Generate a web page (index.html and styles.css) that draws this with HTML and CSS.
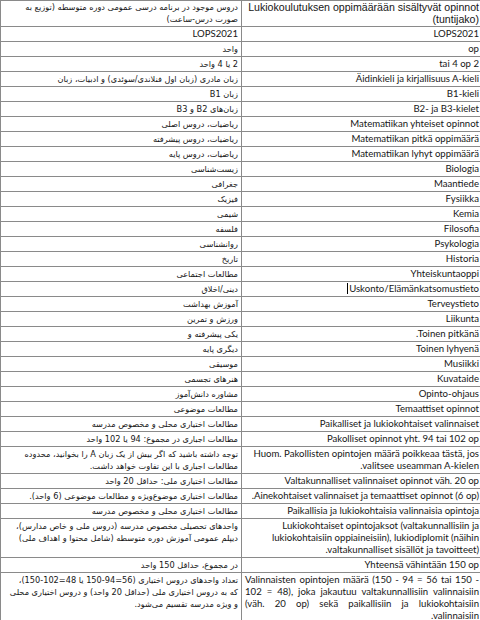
FILE: index.html
```html
<!DOCTYPE html>
<html lang="fi">
<head>
<meta charset="utf-8">
<title>Tuntijako</title>
<link rel="stylesheet" href="styles.css">
</head>
<body>
<table class="grid">
<colgroup><col class="c-fa"><col class="c-fi"></colgroup>
<tr class="head">
<td class="fa" lang="fa">دروس موجود در برنامه درسی عمومی دوره متوسطه (توزیع به<br>صورت درس-ساعت)</td>
<td class="fi hd">Lukiokoulutuksen oppimäärään sisältyvät opinnot<br>(tuntijako)</td>
</tr>
<tr><td class="fa lat">LOPS2021</td><td class="fi">LOPS2021</td></tr>
<tr><td class="fa" lang="fa">واحد</td><td class="fi">op</td></tr>
<tr><td class="fa" lang="fa">2 یا 4 واحد</td><td class="fi">tai 4 op 2</td></tr>
<tr><td class="fa" lang="fa">زبان مادری (زبان اول فنلاندی/سوئدی) و ادبیات، زبان</td><td class="fi">Äidinkieli ja kirjallisuus A-kieli</td></tr>
<tr><td class="fa" lang="fa">زبان B1</td><td class="fi">B1-kieli</td></tr>
<tr><td class="fa" lang="fa">زبان‌های B2 و B3</td><td class="fi">B2- ja B3-kielet</td></tr>
<tr><td class="fa" lang="fa">ریاضیات، دروس اصلی</td><td class="fi">Matematiikan yhteiset opinnot</td></tr>
<tr><td class="fa" lang="fa">ریاضیات، دروس پیشرفته</td><td class="fi">Matematiikan pitkä oppimäärä</td></tr>
<tr><td class="fa" lang="fa">ریاضیات، دروس پایه</td><td class="fi">Matematiikan lyhyt oppimäärä</td></tr>
<tr><td class="fa" lang="fa">زیست‌شناسی</td><td class="fi">Biologia</td></tr>
<tr><td class="fa" lang="fa">جغرافی</td><td class="fi">Maantiede</td></tr>
<tr><td class="fa" lang="fa">فیزیک</td><td class="fi">Fysiikka</td></tr>
<tr><td class="fa" lang="fa">شیمی</td><td class="fi">Kemia</td></tr>
<tr><td class="fa" lang="fa">فلسفه</td><td class="fi">Filosofia</td></tr>
<tr><td class="fa" lang="fa">روانشناسی</td><td class="fi">Psykologia</td></tr>
<tr><td class="fa" lang="fa">تاریخ</td><td class="fi">Historia</td></tr>
<tr><td class="fa" lang="fa">مطالعات اجتماعی</td><td class="fi">Yhteiskuntaoppi</td></tr>
<tr><td class="fa" lang="fa">دینی/اخلاق</td><td class="fi"><span class="caret"></span>Uskonto/Elämänkatsomustieto</td></tr>
<tr><td class="fa" lang="fa">آموزش بهداشت</td><td class="fi">Terveystieto</td></tr>
<tr><td class="fa" lang="fa">ورزش و تمرین</td><td class="fi">Liikunta</td></tr>
<tr><td class="fa" lang="fa">یکی پیشرفته و</td><td class="fi">.Toinen pitkänä</td></tr>
<tr><td class="fa" lang="fa">دیگری پایه</td><td class="fi">Toinen lyhyenä</td></tr>
<tr><td class="fa" lang="fa">موسیقی</td><td class="fi">Musiikki</td></tr>
<tr><td class="fa" lang="fa">هنرهای تجسمی</td><td class="fi">Kuvataide</td></tr>
<tr><td class="fa" lang="fa">مشاوره دانش‌آموز</td><td class="fi">Opinto-ohjaus</td></tr>
<tr><td class="fa" lang="fa">مطالعات موضوعی</td><td class="fi">Temaattiset opinnot</td></tr>
<tr><td class="fa" lang="fa">مطالعات اختیاری محلی و مخصوص مدرسه</td><td class="fi">Paikalliset ja lukiokohtaiset valinnaiset</td></tr>
<tr><td class="fa" lang="fa">مطالعات اجباری در مجموع: 94 یا 102 واحد</td><td class="fi">Pakolliset opinnot yht. 94 tai 102 op</td></tr>
<tr><td class="fa" lang="fa">توجه داشته باشید که اگر بیش از یک زبان A را بخوانید، محدوده<br>مطالعات اجباری با این تفاوت خواهد داشت.</td><td class="fi">Huom. Pakollisten opintojen määrä poikkeaa tästä, jos<br>.valitsee useamman A-kielen</td></tr>
<tr><td class="fa" lang="fa">مطالعات اختیاری ملی: حداقل 20 واحد</td><td class="fi">Valtakunnalliset valinnaiset opinnot väh. 20 op</td></tr>
<tr><td class="fa" lang="fa">مطالعات اختیاری موضوع‌ویژه و مطالعات موضوعی (6 واحد).</td><td class="fi">.Ainekohtaiset valinnaiset ja temaattiset opinnot (6 op)</td></tr>
<tr><td class="fa" lang="fa">مطالعات اختیاری محلی و مخصوص مدرسه</td><td class="fi">Paikallisia ja lukiokohtaisia valinnaisia opintoja</td></tr>
<tr><td class="fa" lang="fa">واحدهای تحصیلی مخصوص مدرسه (دروس ملی و خاص مدارس)،<br>دیپلم عمومی آموزش دوره متوسطه (شامل محتوا و اهداف ملی)</td><td class="fi">Lukiokohtaiset opintojaksot (valtakunnallisiin ja<br>lukiokohtaisiin oppiaineisiin), lukiodiplomit (näihin<br>.valtakunnalliset sisällöt ja tavoitteet)</td></tr>
<tr><td class="fa" lang="fa">در مجموع، حداقل 150 واحد</td><td class="fi">Yhteensä vähintään 150 op</td></tr>
<tr><td class="fa" lang="fa">تعداد واحدهای دروس اختیاری (56=94-150 یا 48=102-150)،<br>که به دروس اختیاری ملی (حداقل 20 واحد) و دروس اختیاری محلی<br>و ویژه مدرسه تقسیم می‌شود.</td><td class="fi just"><span class="jl">Valinnaisten opintojen määrä (150 - 94 = 56 tai 150 -</span><span class="jl">102 = 48), joka jakautuu valtakunnallisiin valinnaisiin</span><span class="jl">(väh. 20 op) sekä paikallisiin ja lukiokohtaisiin</span><span class="ll">.valinnaisiin</span></td></tr>
</table>
</body>
</html>
```
FILE: styles.css
```css
html, body {
  margin: 0;
  padding: 0;
  background: #ffffff;
}

.grid {
  border-collapse: collapse;
  table-layout: fixed;
  width: 482px;
  color: #161616;
}

.c-fa { width: 241px; }
.c-fi { width: 241px; }

.grid td {
  border: 1px solid #8a8a8a;
  padding: 1px 3px 1px 3px;
  line-height: 12px;
  vertical-align: top;
  white-space: nowrap;
  overflow: hidden;
}

.fa {
  direction: rtl;
  text-align: right;
  font-family: "DejaVu Sans", sans-serif;
  font-size: 8.2px;
}

.fa.lat {
  font-family: Lato, sans-serif;
  font-size: 9.6px;
}

.fi {
  direction: ltr;
  text-align: right;
  font-family: Lato, "Liberation Sans", sans-serif;
  font-size: 9.6px;
}

.fi.hd {
  font-family: "Liberation Sans", Arial, sans-serif;
  font-size: 10.6px;
  line-height: 11.5px;
}

.head .fa {
  line-height: 11.5px;
}

.caret {
  display: inline-block;
  width: 1px;
  height: 11px;
  background: #000;
  vertical-align: -2px;
  margin-right: 1px;
}

.just .jl {
  display: block;
  text-align: justify;
  text-align-last: justify;
}

.just .ll {
  display: block;
  text-align: right;
}
```
